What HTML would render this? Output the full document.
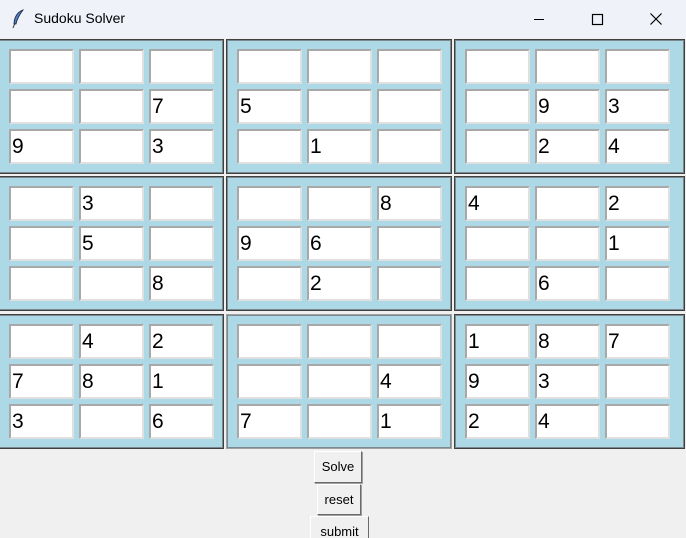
<!DOCTYPE html>
<html style="overflow:hidden;width:686px;height:538px"><head><style>
*{box-sizing:border-box;margin:0;padding:0}
body{width:686px;height:538px;overflow:hidden;background:#f0f0f0;font-family:"Liberation Sans",Arial,sans-serif;position:relative}
.tb{position:absolute;left:0;top:0;width:686px;height:38px;background:#eff2f9}
.tb .t{position:absolute;left:34px;top:10px;font-size:14px;color:#000}
.box{position:absolute;width:226px;height:135px;background:#add8e6;border:1px solid #404040;box-shadow:inset 0 0 0 1px #7a8a90}
.g{position:absolute;left:10px;top:9px;display:grid;grid-template-columns:65px 65px 65px;grid-template-rows:35px 35px 35px;gap:5px}
.g div{background:#fff;border:2px solid;border-color:#a8a8a8 #e0e0e0 #e0e0e0 #a8a8a8;font-size:21px;line-height:32px;padding-left:1px;color:#000}
.btn{position:absolute;background:#f0f0f0;border:1px solid;border-color:#fff #6a6a6a #6a6a6a #fff;box-shadow:1px 1px 0 #a0a0a0;font-size:13px;text-align:center;line-height:29px}
</style></head><body>
<div class="tb">
<svg style="position:absolute;left:11px;top:9px" width="14" height="20" viewBox="0 0 14 20"><path d="M12 1 C6 3 3 9 3 15 L5 15 C6 10 9 5 12 1Z" fill="#4a7fc0" stroke="#224" stroke-width="0.8"/><path d="M4 14 L2 19" stroke="#333" stroke-width="1"/></svg>
<span class="t">Sudoku Solver</span>
<svg style="position:absolute;left:532px;top:12px" width="14" height="14"><path d="M2 7.5H12" stroke="#000" stroke-width="1"/></svg>
<svg style="position:absolute;left:590px;top:12px" width="14" height="14"><rect x="2.5" y="2.5" width="10" height="10" fill="none" stroke="#000" stroke-width="1.2"/></svg>
<svg style="position:absolute;left:649px;top:12px" width="14" height="14"><path d="M1.5 1.5L12.5 12.5M12.5 1.5L1.5 12.5" stroke="#000" stroke-width="1.2"/></svg>
</div>

<div class="box" style="left:-2px;top:39px"><div class="g"><div></div><div></div><div></div><div></div><div></div><div>7</div><div>9</div><div></div><div>3</div></div></div>
<div class="box" style="left:226px;top:39px"><div class="g"><div></div><div></div><div></div><div>5</div><div></div><div></div><div></div><div>1</div><div></div></div></div>
<div class="box" style="left:454px;top:39px;width:231px"><div class="g"><div></div><div></div><div></div><div></div><div>9</div><div>3</div><div></div><div>2</div><div>4</div></div></div>

<div class="box" style="left:-2px;top:176px"><div class="g"><div></div><div>3</div><div></div><div></div><div>5</div><div></div><div></div><div></div><div>8</div></div></div>
<div class="box" style="left:226px;top:176px"><div class="g"><div></div><div></div><div>8</div><div>9</div><div>6</div><div></div><div></div><div>2</div><div></div></div></div>
<div class="box" style="left:454px;top:176px;width:231px"><div class="g"><div>4</div><div></div><div>2</div><div></div><div></div><div>1</div><div></div><div>6</div><div></div></div></div>

<div class="box" style="left:-2px;top:314px"><div class="g"><div></div><div>4</div><div>2</div><div>7</div><div>8</div><div>1</div><div>3</div><div></div><div>6</div></div></div>
<div class="box" style="left:226px;top:314px;border-color:#a0a0a0"><div class="g"><div></div><div></div><div></div><div></div><div></div><div>4</div><div>7</div><div></div><div>1</div></div></div>
<div class="box" style="left:454px;top:314px;width:231px"><div class="g"><div>1</div><div>8</div><div>7</div><div>9</div><div>3</div><div></div><div>2</div><div>4</div><div></div></div></div>

<div class="btn" style="left:314px;top:451px;width:48px;height:32px">Solve</div>
<div class="btn" style="left:317px;top:484px;width:44px;height:31px">reset</div>
<div class="btn" style="left:310px;top:516px;width:59px;height:22px;border-bottom:none;box-shadow:none">submit</div>
</body></html>
